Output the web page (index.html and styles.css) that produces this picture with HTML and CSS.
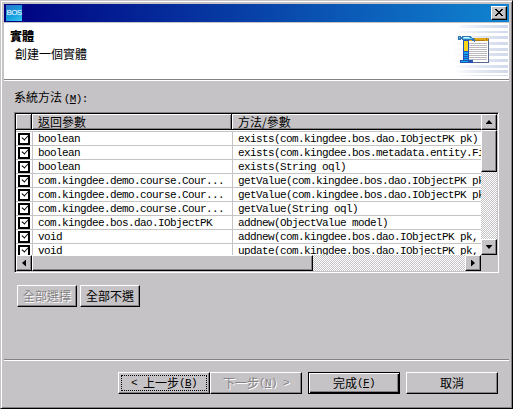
FILE: index.html
```html
<!DOCTYPE html>
<html lang="zh-Hant">
<head>
<meta charset="utf-8">
<title>實體</title>
<link rel="stylesheet" href="styles.css">
</head>
<body>
<div class="window">
  <div class="titlebar">
    <span class="logo">BOS</span>
    <button class="close" aria-label="Close"><svg width="8" height="7" shape-rendering="crispEdges"><path d="M0 0h2v1h1v1h2v-1h1v-1h2v1h-1v1h-1v1h-1v1h1v1h1v1h1v1h-2v-1h-1v-1h-2v1h-1v1h-2v-1h1v-1h1v-1h1v-1h-1v-1h-1v-1h-1z"/></svg></button>
  </div>
  <div class="banner">
    <div class="heading"><h1>實體</h1><p>創建一個實體</p></div>
    <svg class="art" width="57" height="56" viewBox="452 23 57 56" shape-rendering="crispEdges">
      <defs><linearGradient id="f" gradientUnits="userSpaceOnUse" x1="452" x2="509" y1="0" y2="0"><stop offset="0" stop-color="#fff"/><stop offset=".5" stop-color="#e2e7f4"/><stop offset="1" stop-color="#d0d8ea"/></linearGradient></defs>
      <path fill="url(#f)" d="M459 25h49v3h-49zM457 31h51v2h-51zM456 36h52v3h-52zM454 42h54v3h-54zM453 48h55v3h-55zM452 53h56v3h-56zM453 59h55v3h-55zM455 65h53v3h-53zM457 70h51v3h-51z"/><path fill="url(#f)" d="M459 75h49v1h-49z"/>
      <path fill="#fff" d="M468 40h20v22h-20z"/>
      <path fill="#e2a817" d="M468 38h21v3h-21z"/><path fill="#b17a14" d="M474 40h11v1h-11zM486 38h1v3h-1z"/>
      <path fill="#56698c" d="M488 39h1v24h-21v-1h20z"/>
      <path fill="#bdbabf" d="M469 43h18v1h-18zM469 45h18v1h-18zM469 47h18v1h-18zM469 49h18v1h-18zM469 51h18v1h-18zM469 53h18v1h-18zM469 55h18v1h-18zM469 57h18v1h-18zM469 59h18v1h-18z"/>
      <path fill="#2451b5" d="M463 39h6v22h-6zM460 60h13v3h-13z"/>
      <path fill="#ffd51a" d="M464 41h4v10h-4z"/>
      <path fill="#10a9f5" d="M464 52h4v2h-4zM464 55h4v1h-4zM464 57h4v1h-4zM464 59h4v1h-4zM461 61h7v1h-7z"/>
      <path fill="#3275b7" d="M458 36h3v4h-3zM461 37h1v2h-1zM462 36h9v1h1v1h2v1h1v3h-1v-1h-2v-1h-10z"/>
      <path fill="#6bd7ff" d="M459 37h1v1h-1zM463 37h7v1h2v1h-9z"/><path fill="#d8f8ff" d="M464 37h5v1h-5z"/>
    </svg>
  </div>
  <main>
    <div class="label">系統方法 <span class="mono">(<u>M</u>):</span></div>
    <div class="tablebox">
      <div class="grid">
        <div class="row head"><span></span><span>返回參數</span><span>方法/參數</span></div>
        <div class="row"><i class="check"></i><span>boolean</span><span>exists(com.kingdee.bos.dao.IObjectPK pk)</span></div>
        <div class="row"><i class="check"></i><span>boolean</span><span>exists(com.kingdee.bos.metadata.entity.Fi</span></div>
        <div class="row"><i class="check"></i><span>boolean</span><span>exists(String oql)</span></div>
        <div class="row"><i class="check"></i><span>com.kingdee.demo.course.Cour...</span><span>getValue(com.kingdee.bos.dao.IObjectPK pk</span></div>
        <div class="row"><i class="check"></i><span>com.kingdee.demo.course.Cour...</span><span>getValue(com.kingdee.bos.dao.IObjectPK pk</span></div>
        <div class="row"><i class="check"></i><span>com.kingdee.demo.course.Cour...</span><span>getValue(String oql)</span></div>
        <div class="row"><i class="check"></i><span>com.kingdee.bos.dao.IObjectPK</span><span>addnew(ObjectValue model)</span></div>
        <div class="row"><i class="check"></i><span>void</span><span>addnew(com.kingdee.bos.dao.IObjectPK pk,</span></div>
        <div class="row"><i class="check"></i><span>void</span><span>update(com.kingdee.bos.dao.IObjectPK pk,</span></div>
      </div>
      <div class="scroll vertical"><b class="raised arrow"><i class="up"></i></b><b class="raised thumb"></b><b class="raised arrow end"><i class="down"></i></b></div>
      <div class="scroll horizontal"><b class="raised arrow"><i class="left"></i></b><b class="raised thumb"></b><b class="raised arrow end"><i class="right"></i></b></div>
    </div>
    <div class="selection"><button class="raised button disabled">全部選擇</button><button class="raised button">全部不選</button></div>
  </main>
  <footer>
    <button class="raised button focused"><span class="mono">&lt; </span>上一步<span class="mono">(<u>B</u>)</span></button>
    <button class="raised button disabled">下一步<span class="mono">(<u>N</u>) &gt;</span></button>
    <button class="raised button default">完成<span class="mono">(<u>F</u>)</span></button>
    <button class="raised button cancel">取消</button>
  </footer>
</div>
</body>
</html>
```

FILE: styles.css
```css
* { box-sizing: border-box; }
body { margin: 0; overflow: hidden; font: 12px/14px "Noto Sans CJK TC", sans-serif; color: #000; }
h1, p { margin: 0; font-size: 12px; line-height: 18px; }
button { font: inherit; padding: 0; margin: 0; color: inherit; }
.window {
  width: 513px; height: 409px; background: #c6c3c6; padding: 3px 2px 1px 3px;
  border: 1px solid; border-color: #c6c3c6 #000 #000 #c6c3c6;
  box-shadow: inset 1px 1px #fff, inset -1px -1px #848284;
  display: flex; flex-direction: column;
}
.titlebar { height: 18px; margin-right: 1px; padding: 0 2px; display: flex; align-items: center; justify-content: space-between; background: linear-gradient(90deg, #000080, #1084d0); }
.logo { width: 16px; height: 16px; background: linear-gradient(150deg, #2875c7, #16a0df 60%, #38c7ee); color: #fff; font: 8px/16px "Liberation Sans", sans-serif; letter-spacing: -.6px; text-align: center; }
.close { width: 16px; height: 14px; background: #c6c3c6; border: 1px solid; border-color: #fff #000 #000 #fff; box-shadow: inset -1px -1px #848284; display: flex; justify-content: center; align-items: center; padding: 0 1px 1px 0; }
.banner { height: 57px; margin: 1px 1px 0 0; background: #fff; border-bottom: 1px solid #848284; box-shadow: 0 1px #fff; display: flex; justify-content: space-between; }
.heading { padding: 4px 0 0 6px; }
.heading h1 { font-weight: 900; }
.heading p { padding-left: 5px; }
main { flex: 1; padding: 10px 0 0 10px; }
.mono, .row span { font-family: "Liberation Mono", "Noto Sans CJK TC", monospace; font-size: 11px; letter-spacing: -.6px; white-space: pre; }
.label { height: 14px; word-spacing: -1px; }
.tablebox {
  width: 485px; height: 161px; margin-top: 8px; border: 1px solid; border-color: #848284 #fff #fff #848284;
  box-shadow: inset 1px 1px #000; padding: 1px;
  display: grid; grid-template-columns: 465px 16px; grid-template-rows: 141px 16px; background: #c6c3c6;
}
.grid { background: #fff; overflow: hidden; }
.row { display: grid; grid-template-columns: 17px 200px 1fr; height: 14px; border-bottom: 1px solid #c6c3c6; }
.row span { padding-left: 5px; line-height: 15px; height: 13px; border-left: 1px solid #c6c3c6; overflow: hidden; }
.row .check + span { margin-left: -1px; }
.row .check ~ span:last-child { margin-left: -1px; }
.head { height: 18px; border-bottom: 1px solid #c6c3c6; }
.head span { height: 16px; padding: 0 0 0 5px; font: 12px/15px "Noto Sans CJK TC", sans-serif; letter-spacing: 0; background: #c6c3c6; border: 0; border-bottom: 1px solid #000; box-shadow: inset 1px 1px #fff, inset 0 -1px #848284; }
.head span:not(:last-child) { border-right: 1px solid #000; box-shadow: inset 1px 1px #fff, inset -1px -1px #848284; }
.head span:first-child { width: 16px; }
.head span:nth-child(2) { margin-left: -1px; width: 200px; padding-left: 6px; }
.head span:last-child { margin-left: -1px; padding-left: 6px; }
.check { width: 12px; height: 12px; margin: 1px 0 0 2px; border: 2px solid #000; position: relative; }
.check::after { content: ""; position: absolute; left: 2px; top: 0; width: 5px; height: 3px; border: solid #000; border-width: 0 0 1.5px 1.5px; transform: rotate(-48deg); }
.raised { background: #c6c3c6; border: 1px solid; border-color: #fff #000 #000 #fff; box-shadow: inset -1px -1px #848284; }
.scroll { display: flex; background: repeating-conic-gradient(#fff 0 25%, #c6c3c6 0 50%) 0 0 / 2px 2px; }
.vertical { flex-direction: column; }
.arrow { width: 16px; height: 16px; display: flex; align-items: center; justify-content: center; }
.end { margin-left: auto; }
.vertical .end { margin: auto 0 0; }
.vertical .thumb { height: 42px; }
.horizontal .thumb { width: 281px; }
.arrow i { width: 7px; height: 4px; background: #000; }
.up { clip-path: polygon(50% 0, 100% 100%, 0 100%); }
.down { clip-path: polygon(0 0, 100% 0, 50% 100%); }
.arrow .left, .arrow .right { width: 4px; height: 7px; }
.left { clip-path: polygon(0 50%, 100% 0, 100% 100%); }
.right { clip-path: polygon(0 0, 100% 50%, 0 100%); }
.selection { display: flex; gap: 3px; margin: 12px 0 0 3px; }
.button { width: 92px; height: 22px; display: flex; align-items: center; justify-content: center; line-height: 18px; position: relative; padding-bottom: 1px; white-space: pre; }
.selection .button { width: 60px; }
.disabled { color: #848284; text-shadow: 1px 1px #fff; }
footer { height: 47px; margin-right: 1px; padding: 11px 10px 0 114px; border-top: 1px solid #fff; box-shadow: 0 -1px #848284; display: flex; }
.focused::after { content: ""; position: absolute; inset: 2px 2px 2px 2px; border: 1px dotted #000; }
.default { margin-left: 6px; border-color: #000; box-shadow: inset 1px 1px #fff, inset -1px -1px #000, inset -2px -2px #848284; }
.cancel { margin-left: 6px; }
```
